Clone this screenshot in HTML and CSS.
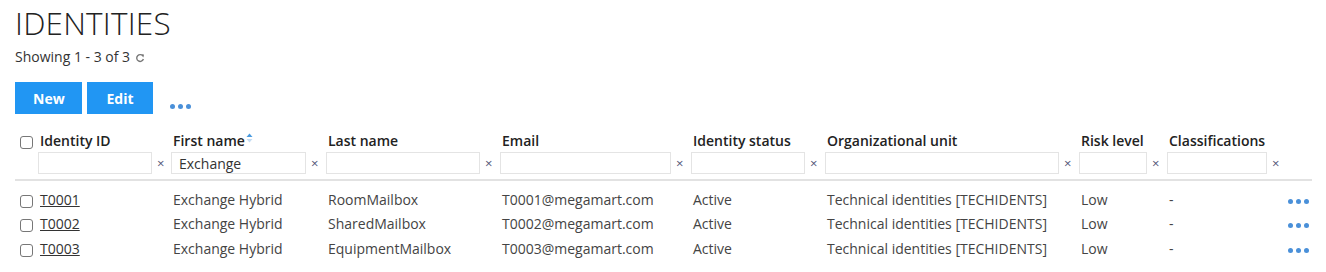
FILE: index.html
```html
<!DOCTYPE html>
<html lang="en">
<head>
    <meta charset="UTF-8">
    <title>Identities</title>
    <link rel="stylesheet" href="styles.css">
</head>
<body>
    <div class="page">
        <h1 class="page-title">IDENTITIES</h1>
        <div class="showing">
            Showing 1 - 3 of 3
            <svg class="refresh" width="10" height="10" viewBox="0 0 10 10">
                <path d="M8 3.2A3.4 3.4 0 1 0 8.4 6" fill="none" stroke="#777" stroke-width="1.4"/>
                <path d="M6.2 1.2L9 1.6 8.4 4.4z" fill="#777"/>
            </svg>
        </div>

        <div class="toolbar">
            <button class="btn">New</button>
            <button class="btn">Edit</button>
            <span class="dots"><i></i><i></i><i></i></span>
        </div>

        <table class="grid">
            <colgroup>
                <col class="c-check">
                <col style="width:133px">
                <col style="width:155px">
                <col style="width:174px">
                <col style="width:191px">
                <col style="width:134px">
                <col style="width:254px">
                <col style="width:88px">
                <col style="width:119px">
                <col>
            </colgroup>
            <thead>
                <tr class="head-row">
                    <th><input type="checkbox" class="check"></th>
                    <th>Identity ID</th>
                    <th>First name<span class="sort"><svg width="7" height="10" viewBox="0 0 7 10"><path d="M3.5 0.5L6.5 4H0.5z" fill="#4a9be0"/><path d="M3.5 9.5L6.5 6H0.5z" fill="#c5ddf3"/></svg></span></th>
                    <th>Last name</th>
                    <th>Email</th>
                    <th>Identity status</th>
                    <th>Organizational unit</th>
                    <th>Risk level</th>
                    <th>Classifications</th>
                    <th></th>
                </tr>
                <tr class="filter-row">
                    <th></th>
                    <th><div class="filter"><input style="width:114px"><span class="clear">×</span></div></th>
                    <th><div class="filter"><input style="width:135px" value="Exchange"><span class="clear">×</span></div></th>
                    <th><div class="filter"><input style="width:154px"><span class="clear">×</span></div></th>
                    <th><div class="filter"><input style="width:171px"><span class="clear">×</span></div></th>
                    <th><div class="filter"><input style="width:114px"><span class="clear">×</span></div></th>
                    <th><div class="filter"><input style="width:234px"><span class="clear">×</span></div></th>
                    <th><div class="filter"><input style="width:68px"><span class="clear">×</span></div></th>
                    <th><div class="filter"><input style="width:100px"><span class="clear">×</span></div></th>
                    <th></th>
                </tr>
            </thead>
            <tbody>
                <tr>
                    <td><input type="checkbox" class="check"></td>
                    <td><a href="#">T0001</a></td>
                    <td>Exchange Hybrid</td>
                    <td>RoomMailbox</td>
                    <td>T0001@megamart.com</td>
                    <td>Active</td>
                    <td>Technical identities [TECHIDENTS]</td>
                    <td>Low</td>
                    <td>-</td>
                    <td class="row-menu"><span class="dots"><i></i><i></i><i></i></span></td>
                </tr>
                <tr>
                    <td><input type="checkbox" class="check"></td>
                    <td><a href="#">T0002</a></td>
                    <td>Exchange Hybrid</td>
                    <td>SharedMailbox</td>
                    <td>T0002@megamart.com</td>
                    <td>Active</td>
                    <td>Technical identities [TECHIDENTS]</td>
                    <td>Low</td>
                    <td>-</td>
                    <td class="row-menu"><span class="dots"><i></i><i></i><i></i></span></td>
                </tr>
                <tr>
                    <td><input type="checkbox" class="check"></td>
                    <td><a href="#">T0003</a></td>
                    <td>Exchange Hybrid</td>
                    <td>EquipmentMailbox</td>
                    <td>T0003@megamart.com</td>
                    <td>Active</td>
                    <td>Technical identities [TECHIDENTS]</td>
                    <td>Low</td>
                    <td>-</td>
                    <td class="row-menu"><span class="dots"><i></i><i></i><i></i></span></td>
                </tr>
            </tbody>
        </table>
    </div>
</body>
</html>
```

FILE: styles.css
```css
body {
    margin: 0;
    font-family: "Open Sans", Arial, sans-serif;
    font-size: 14px;
    color: #333;
    background-color: #fff;
}

.page {
    padding: 0 14px 0 15px;
}

.page-title {
    margin: 0;
    padding-top: 3px;
    font-size: 31.5px;
    font-weight: 300;
    line-height: 40px;
    color: #222;
    letter-spacing: 0.2px;
}

.showing {
    margin-top: 4px;
    line-height: 20px;
    color: #333;
}

.refresh {
    vertical-align: -1px;
    margin-left: 1px;
}

.toolbar {
    display: flex;
    align-items: center;
    gap: 5px;
    margin-top: 15px;
}

.btn {
    height: 32px;
    padding: 0 18px;
    border: none;
    border-radius: 0;
    background-color: #2196f3;
    color: #fff;
    font-family: inherit;
    font-size: 14px;
    font-weight: 700;
    cursor: pointer;
}

.btn:first-child {
    width: 67px;
}

.btn:nth-child(2) {
    width: 66px;
}

.dots {
    display: inline-flex;
    gap: 3px;
}

.dots i {
    display: block;
    width: 5px;
    height: 5px;
    border-radius: 50%;
    background-color: #4a90d9;
}

.toolbar .dots {
    margin-left: 12px;
    margin-top: 16px;
}

.grid {
    width: 1297px;
    margin-top: 16px;
    border-collapse: collapse;
    table-layout: fixed;
}

.c-check {
    width: 23px;
}

.grid th,
.grid td {
    padding: 0;
    text-align: left;
    white-space: nowrap;
}

.head-row th {
    height: 20px;
    font-weight: 600;
    color: #222;
    vertical-align: bottom;
    padding-left: 2px;
}

.head-row th:first-child {
    padding-left: 5px;
}

.sort svg {
    vertical-align: 3px;
    margin-left: 1px;
}

.filter-row th {
    padding-top: 2px;
    padding-bottom: 5px;
    border-bottom: 2px solid #e2e2e2;
}

.filter {
    display: flex;
    align-items: center;
}

.filter input {
    box-sizing: border-box;
    height: 22px;
    border: 1px solid #e4e4e4;
    padding: 0 7px;
    font-family: inherit;
    font-size: 14px;
    color: #333;
    outline: none;
}

.clear {
    margin-left: 5px;
    font-size: 13px;
    font-weight: 400;
    color: #557;
}

.grid tbody td {
    height: 24.5px;
    color: #444;
    padding-left: 2px;
}

.grid tbody tr:first-child td {
    padding-top: 6px;
}

.grid tbody td:first-child {
    padding-left: 5px;
}

.check {
    appearance: none;
    -webkit-appearance: none;
    box-sizing: border-box;
    width: 13px;
    height: 13px;
    margin: 0;
    border: 1px solid #777;
    border-radius: 3px;
    background-color: #fff;
    vertical-align: middle;
}

.grid a {
    color: #333;
    text-decoration: underline;
}

.row-menu {
    text-align: right;
}

.row-menu .dots {
    vertical-align: middle;
}
```
